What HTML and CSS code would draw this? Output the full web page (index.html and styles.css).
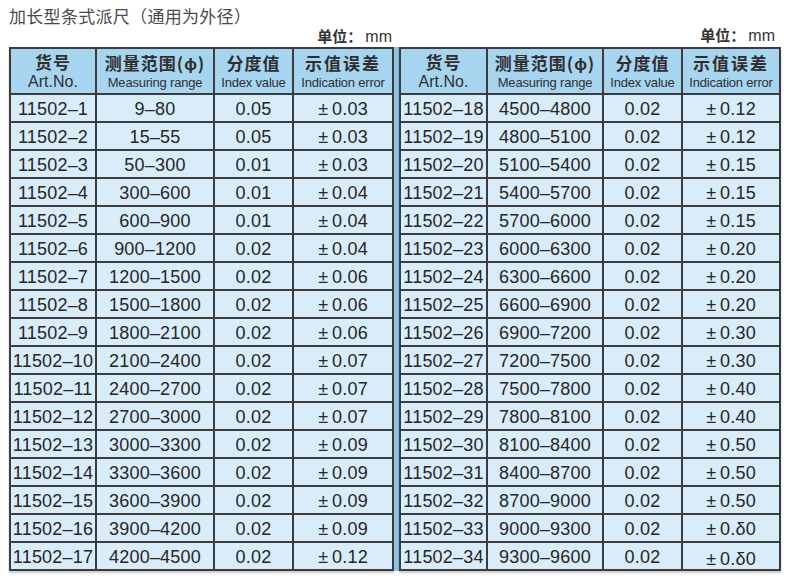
FILE: index.html
```html
<!DOCTYPE html>
<html lang="zh">
<head>
<meta charset="utf-8">
<title>加长型条式派尺</title>
<link rel="stylesheet" href="styles.css">
</head>
<body>
<div class="page">
  <h1 class="title">加长型条式派尺（通用为外径）</h1>
  <div class="units">
    <div class="unit unit-left">单位：<span class="mm">mm</span></div>
    <div class="unit unit-right">单位：<span class="mm">mm</span></div>
  </div>
  <div class="tables">
    <div class="grid grid-left">
      <div class="hd"><span class="zh">货号</span><span class="en en-big">Art.No.</span></div>
      <div class="hd"><span class="zh">测量范围(ϕ)</span><span class="en">Measuring range</span></div>
      <div class="hd"><span class="zh">分度值</span><span class="en">Index value</span></div>
      <div class="hd"><span class="zh zh-wide">示值误差</span><span class="en">Indication error</span></div>

      <div class="c">11502–1</div><div class="c">9–80</div><div class="c">0.05</div><div class="c">±&#8201;0.03</div>
      <div class="c">11502–2</div><div class="c">15–55</div><div class="c">0.05</div><div class="c">±&#8201;0.03</div>
      <div class="c">11502–3</div><div class="c">50–300</div><div class="c">0.01</div><div class="c">±&#8201;0.03</div>
      <div class="c">11502–4</div><div class="c">300–600</div><div class="c">0.01</div><div class="c">±&#8201;0.04</div>
      <div class="c">11502–5</div><div class="c">600–900</div><div class="c">0.01</div><div class="c">±&#8201;0.04</div>
      <div class="c">11502–6</div><div class="c">900–1200</div><div class="c">0.02</div><div class="c">±&#8201;0.04</div>
      <div class="c">11502–7</div><div class="c">1200–1500</div><div class="c">0.02</div><div class="c">±&#8201;0.06</div>
      <div class="c">11502–8</div><div class="c">1500–1800</div><div class="c">0.02</div><div class="c">±&#8201;0.06</div>
      <div class="c">11502–9</div><div class="c">1800–2100</div><div class="c">0.02</div><div class="c">±&#8201;0.06</div>
      <div class="c">11502–10</div><div class="c">2100–2400</div><div class="c">0.02</div><div class="c">±&#8201;0.07</div>
      <div class="c">11502–11</div><div class="c">2400–2700</div><div class="c">0.02</div><div class="c">±&#8201;0.07</div>
      <div class="c">11502–12</div><div class="c">2700–3000</div><div class="c">0.02</div><div class="c">±&#8201;0.07</div>
      <div class="c">11502–13</div><div class="c">3000–3300</div><div class="c">0.02</div><div class="c">±&#8201;0.09</div>
      <div class="c">11502–14</div><div class="c">3300–3600</div><div class="c">0.02</div><div class="c">±&#8201;0.09</div>
      <div class="c">11502–15</div><div class="c">3600–3900</div><div class="c">0.02</div><div class="c">±&#8201;0.09</div>
      <div class="c">11502–16</div><div class="c">3900–4200</div><div class="c">0.02</div><div class="c">±&#8201;0.09</div>
      <div class="c">11502–17</div><div class="c">4200–4500</div><div class="c">0.02</div><div class="c">±&#8201;0.12</div>
    </div>
    <div class="divider"></div>
    <div class="grid grid-right">
      <div class="hd"><span class="zh">货号</span><span class="en en-big">Art.No.</span></div>
      <div class="hd"><span class="zh">测量范围(ϕ)</span><span class="en">Measuring range</span></div>
      <div class="hd"><span class="zh">分度值</span><span class="en">Index value</span></div>
      <div class="hd"><span class="zh zh-wide">示值误差</span><span class="en">Indication error</span></div>

      <div class="c">11502–18</div><div class="c">4500–4800</div><div class="c">0.02</div><div class="c">±&#8201;0.12</div>
      <div class="c">11502–19</div><div class="c">4800–5100</div><div class="c">0.02</div><div class="c">±&#8201;0.12</div>
      <div class="c">11502–20</div><div class="c">5100–5400</div><div class="c">0.02</div><div class="c">±&#8201;0.15</div>
      <div class="c">11502–21</div><div class="c">5400–5700</div><div class="c">0.02</div><div class="c">±&#8201;0.15</div>
      <div class="c">11502–22</div><div class="c">5700–6000</div><div class="c">0.02</div><div class="c">±&#8201;0.15</div>
      <div class="c">11502–23</div><div class="c">6000–6300</div><div class="c">0.02</div><div class="c">±&#8201;0.20</div>
      <div class="c">11502–24</div><div class="c">6300–6600</div><div class="c">0.02</div><div class="c">±&#8201;0.20</div>
      <div class="c">11502–25</div><div class="c">6600–6900</div><div class="c">0.02</div><div class="c">±&#8201;0.20</div>
      <div class="c">11502–26</div><div class="c">6900–7200</div><div class="c">0.02</div><div class="c">±&#8201;0.30</div>
      <div class="c">11502–27</div><div class="c">7200–7500</div><div class="c">0.02</div><div class="c">±&#8201;0.30</div>
      <div class="c">11502–28</div><div class="c">7500–7800</div><div class="c">0.02</div><div class="c">±&#8201;0.40</div>
      <div class="c">11502–29</div><div class="c">7800–8100</div><div class="c">0.02</div><div class="c">±&#8201;0.40</div>
      <div class="c">11502–30</div><div class="c">8100–8400</div><div class="c">0.02</div><div class="c">±&#8201;0.50</div>
      <div class="c">11502–31</div><div class="c">8400–8700</div><div class="c">0.02</div><div class="c">±&#8201;0.50</div>
      <div class="c">11502–32</div><div class="c">8700–9000</div><div class="c">0.02</div><div class="c">±&#8201;0.50</div>
      <div class="c">11502–33</div><div class="c">9000–9300</div><div class="c">0.02</div><div class="c">±&#8201;0.δ0</div>
      <div class="c">11502–34</div><div class="c">9300–9600</div><div class="c">0.02</div><div class="c low">±&#8201;0.δ0</div>
    </div>
  </div>
</div>
</body>
</html>
```

FILE: styles.css
```css
html, body {
  margin: 0;
  padding: 0;
  background: #ffffff;
}

.page {
  width: 790px;
  height: 584px;
  font-family: "Liberation Sans", "Noto Sans CJK SC", sans-serif;
  color: #2a2a2a;
}

.title {
  margin: 0;
  padding: 5px 0 0 9px;
  height: 21px;
  font-family: "Noto Sans CJK SC", sans-serif;
  font-weight: 400;
  font-size: 17px;
  line-height: 21px;
  color: #4a4a4a;
  letter-spacing: 0.3px;
}

.units {
  display: flex;
  height: 21px;
  margin-left: 9px;
}

.unit {
  font-family: "Noto Sans CJK SC", sans-serif;
  font-weight: 700;
  font-size: 15px;
  line-height: 18px;
  color: #333333;
  text-align: right;
}

.unit .mm {
  font-family: "Liberation Sans", sans-serif;
  font-weight: 400;
  font-size: 16px;
  margin-left: 3px;
}

.unit-left {
  width: 385px;
  box-sizing: border-box;
  padding-right: 2px;
  padding-top: 1px;
}

.unit-right {
  width: 387px;
  box-sizing: border-box;
  padding-right: 6px;
}

.tables {
  display: flex;
  margin-left: 9px;
  align-items: stretch;
}

.grid {
  display: grid;
  gap: 2px;
  padding: 2px;
  background: #3c3c3c;
  grid-template-rows: 44px;
  grid-auto-rows: 26px;
  box-shadow: 0 2px 2px rgba(0, 0, 0, 0.22);
}

.grid-left {
  grid-template-columns: 84px 116px 77px 98px;
}

.grid-right {
  grid-template-columns: 85px 114px 77px 96px;
}

.divider {
  width: 5px;
  background: #8cc5ea;
}

.hd {
  background: #a7d4ef;
  display: flex;
  flex-direction: column;
  align-items: center;
  justify-content: center;
  gap: 2px;
  color: #2f2f2f;
  white-space: nowrap;
  overflow: hidden;
}

.hd .zh {
  font-family: "Noto Sans CJK SC", sans-serif;
  font-weight: 700;
  font-size: 17px;
  line-height: 20px;
  letter-spacing: 1px;
}

.hd .zh-wide {
  letter-spacing: 2px;
}

.hd .en {
  font-family: "Liberation Sans", sans-serif;
  font-size: 13px;
  line-height: 15px;
  letter-spacing: -0.2px;
}

.hd .en-big {
  font-size: 16px;
  line-height: 16px;
  letter-spacing: 0;
}

.c {
  background: #d9ecf9;
  display: flex;
  align-items: center;
  justify-content: center;
  padding-top: 2px;
  box-sizing: border-box;
  font-family: "Liberation Sans", sans-serif;
  font-size: 18px;
  line-height: 20px;
  letter-spacing: 0.2px;
  color: #262626;
  white-space: nowrap;
  overflow: visible;
}

.c.low {
  padding-top: 6px;
}
```
